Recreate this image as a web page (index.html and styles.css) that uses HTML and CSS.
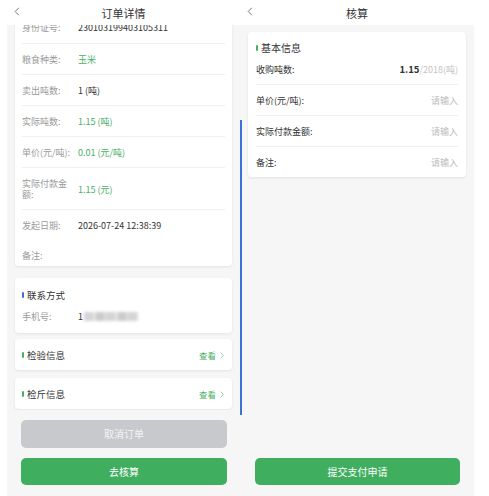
FILE: index.html
```html
<!DOCTYPE html>
<html lang="zh-CN">
<head>
<meta charset="utf-8">
<title>订单详情 / 核算</title>
<link rel="stylesheet" href="styles.css">
</head>
<body>
<div class="stage">
  <!-- order detail screen -->
  <section class="phone phone-left">
    <header class="nav">
      <span class="back"><svg width="6" height="9" viewBox="0 0 6 9"><path d="M4.8 0.8 L1.2 4.5 L4.8 8.2" fill="none" stroke="#666" stroke-width="0.9"/></svg></span>
      <h1 class="nav-title">订单详情</h1>
      <span></span>
    </header>
    <main class="content">
      <div class="card card-detail">
        <div class="row row-first"><span class="label">身份证号:</span><span class="value">230103199403105311</span></div>
        <div class="row"><span class="label">粮食种类:</span><span class="value green">玉米</span></div>
        <div class="row"><span class="label">卖出吨数:</span><span class="value">1 (吨)</span></div>
        <div class="row"><span class="label">实际吨数:</span><span class="value green">1.15 (吨)</span></div>
        <div class="row"><span class="label">单价(元/吨):</span><span class="value green">0.01 (元/吨)</span></div>
        <div class="row"><span class="label">实际付款金额:</span><span class="value green">1.15 (元)</span></div>
        <div class="row row-plain"><span class="label">发起日期:</span><span class="value">2026-07-24 12:38:39</span></div>
        <div class="row row-last"><span class="label">备注:</span><span class="value"></span></div>
      </div>

      <div class="card card-contact">
        <div class="card-title"><i class="mark mark-blue"></i>联系方式</div>
        <div class="row row-flat"><span class="label">手机号:</span><span class="value">1<span class="masked"></span></span></div>
      </div>

      <div class="card card-link">
        <div class="card-title"><i class="mark"></i>检验信息</div>
        <span class="more">查看<svg width="4" height="7" viewBox="0 0 4 7"><path d="M0.6 0.6 L3.3 3.5 L0.6 6.4" fill="none" stroke="#8bbf97" stroke-width="0.8"/></svg></span>
      </div>

      <div class="card card-link card-link-last">
        <div class="card-title"><i class="mark"></i>检斤信息</div>
        <span class="more">查看<svg width="4" height="7" viewBox="0 0 4 7"><path d="M0.6 0.6 L3.3 3.5 L0.6 6.4" fill="none" stroke="#8bbf97" stroke-width="0.8"/></svg></span>
      </div>
    </main>
    <footer class="actions actions-left">
      <button class="btn btn-disabled">取消订单</button>
      <button class="btn btn-primary">去核算</button>
    </footer>
  </section>

  <div class="scroll-indicator"></div>

  <!-- settlement screen -->
  <section class="phone phone-right">
    <header class="nav">
      <span class="back"><svg width="6" height="9" viewBox="0 0 6 9"><path d="M4.8 0.8 L1.2 4.5 L4.8 8.2" fill="none" stroke="#666" stroke-width="0.9"/></svg></span>
      <h1 class="nav-title">核算</h1>
      <span></span>
    </header>
    <main class="content content-right">
      <div class="card card-form">
        <div class="card-title"><i class="mark"></i>基本信息</div>
        <div class="row form-row"><span class="label-dark">收购吨数:</span><span class="input-value"><b>1.15</b><em>/2018(吨)</em></span></div>
        <div class="row form-row"><span class="label-dark">单价(元/吨):</span><span class="placeholder">请输入</span></div>
        <div class="row form-row"><span class="label-dark">实际付款金额:</span><span class="placeholder">请输入</span></div>
        <div class="row form-row row-end"><span class="label-dark">备注:</span><span class="placeholder">请输入</span></div>
      </div>
    </main>
    <footer class="actions actions-right">
      <button class="btn btn-primary">提交支付申请</button>
    </footer>
  </section>
</div>
</body>
</html>
```

FILE: styles.css
```css
* { box-sizing: border-box; }

body {
  margin: 0;
  background: #fff;
  font-family: "Noto Sans CJK SC", "Noto Sans", sans-serif;
  color: #333;
}

.stage {
  position: relative;
  display: flex;
  height: 496px;
  padding-left: 7px;
}

.phone {
  display: flex;
  flex-direction: column;
  height: 496px;
  background: #f6f6f6;
}
.phone-left { width: 233px; }
.phone-right { width: 234px; }

/* navigation bar */
.nav {
  flex: none;
  height: 25px;
  background: #fff;
  display: grid;
  grid-template-columns: 1fr auto 1fr;
  align-items: center;
}
.back {
  display: flex;
  padding-left: 7px;
  padding-bottom: 2px;
}
.nav-title {
  margin: 0;
  font-size: 11px;
  font-weight: 400;
  line-height: 12px;
  color: #333;
}

/* scrolling area */
.content {
  flex: 1;
  overflow: hidden;
  padding: 0 8px;
}
.content-right { padding-top: 7px; }

.card {
  background: #fff;
  border-radius: 4px;
  box-shadow: 0 1px 3px rgba(0, 0, 0, 0.08);
}
.card-detail { margin-top: -14px; }

.row {
  display: flex;
  align-items: center;
  margin: 0 7px;
  padding: 10px 0 9px;
  border-bottom: 1px solid #efefef;
  font-size: 9px;
  line-height: 11px;
}
.row-first { padding-top: 11px; padding-bottom: 10px; }
.row-plain { border-bottom: none; }
.row-last { border-bottom: none; padding-bottom: 5px; }
.row-flat { border-bottom: none; padding: 0; margin: 0; }

.label {
  flex: none;
  width: 50px;
  margin-right: 6px;
  color: #9a9a9a;
}
.value { color: #333; display: flex; align-items: center; }
.green { color: #4bae66; }

.masked {
  display: inline-block;
  width: 54px;
  height: 9px;
  margin-left: 1px;
  background: repeating-linear-gradient(90deg, #cdcdcd 0 9px, #e0e0e0 9px 12px, #c2c2c2 12px 20px, #dadada 20px 22px);
  filter: blur(1.8px);
  opacity: 0.85;
}

/* titled cards */
.card-title {
  display: flex;
  align-items: center;
  font-size: 9.5px;
  line-height: 12px;
  color: #333;
}
.mark {
  width: 2px;
  height: 6px;
  border-radius: 1px;
  background: #4bae66;
  margin-right: 3px;
}
.mark-blue { background: #3c6fd6; }

.card-contact {
  margin-top: 12px;
  padding: 11px 7px 11px;
}
.card-contact .card-title { margin-bottom: 10px; }

.card-link {
  margin-top: 6px;
  padding: 10px 7px 9px;
  display: flex;
  align-items: center;
  justify-content: space-between;
}
.card-link-last { margin-top: 8px; }

.more {
  display: flex;
  align-items: center;
  gap: 4px;
  font-size: 8.5px;
  line-height: 11px;
  color: #4bae66;
  padding-right: 1px;
}

/* bottom buttons */
.actions {
  flex: none;
  display: flex;
  flex-direction: column;
  gap: 10px;
  padding: 10px 13px 11px 14px;
}
.actions-right { padding: 0 14px 11px 15px; }

.btn {
  height: 27.5px;
  border: none;
  border-radius: 5px;
  font-family: inherit;
  font-size: 10px;
  color: #fff;
}
.btn-disabled { background: #c8c9cc; color: #f4f4f5; }
.btn-primary { background: #40ae5f; }

/* settlement form */
.card-form { padding-top: 10px; }
.card-form .card-title { padding: 0 8px; font-size: 10px; }
.form-row {
  margin: 0 8px;
  justify-content: space-between;
}
.card-form .form-row:first-of-type { padding-top: 13px; padding-bottom: 8px; }
.row-end { border-bottom: none; }

.label-dark { color: #333; }
.placeholder { color: #bbb; }
.input-value b { font-weight: 700; color: #333; font-size: 9.5px; }
.input-value em { font-style: normal; color: #c4c4c4; }

.scroll-indicator {
  position: absolute;
  left: 240px;
  top: 120px;
  width: 1.5px;
  height: 295px;
  background: #3a72d8;
}
```
